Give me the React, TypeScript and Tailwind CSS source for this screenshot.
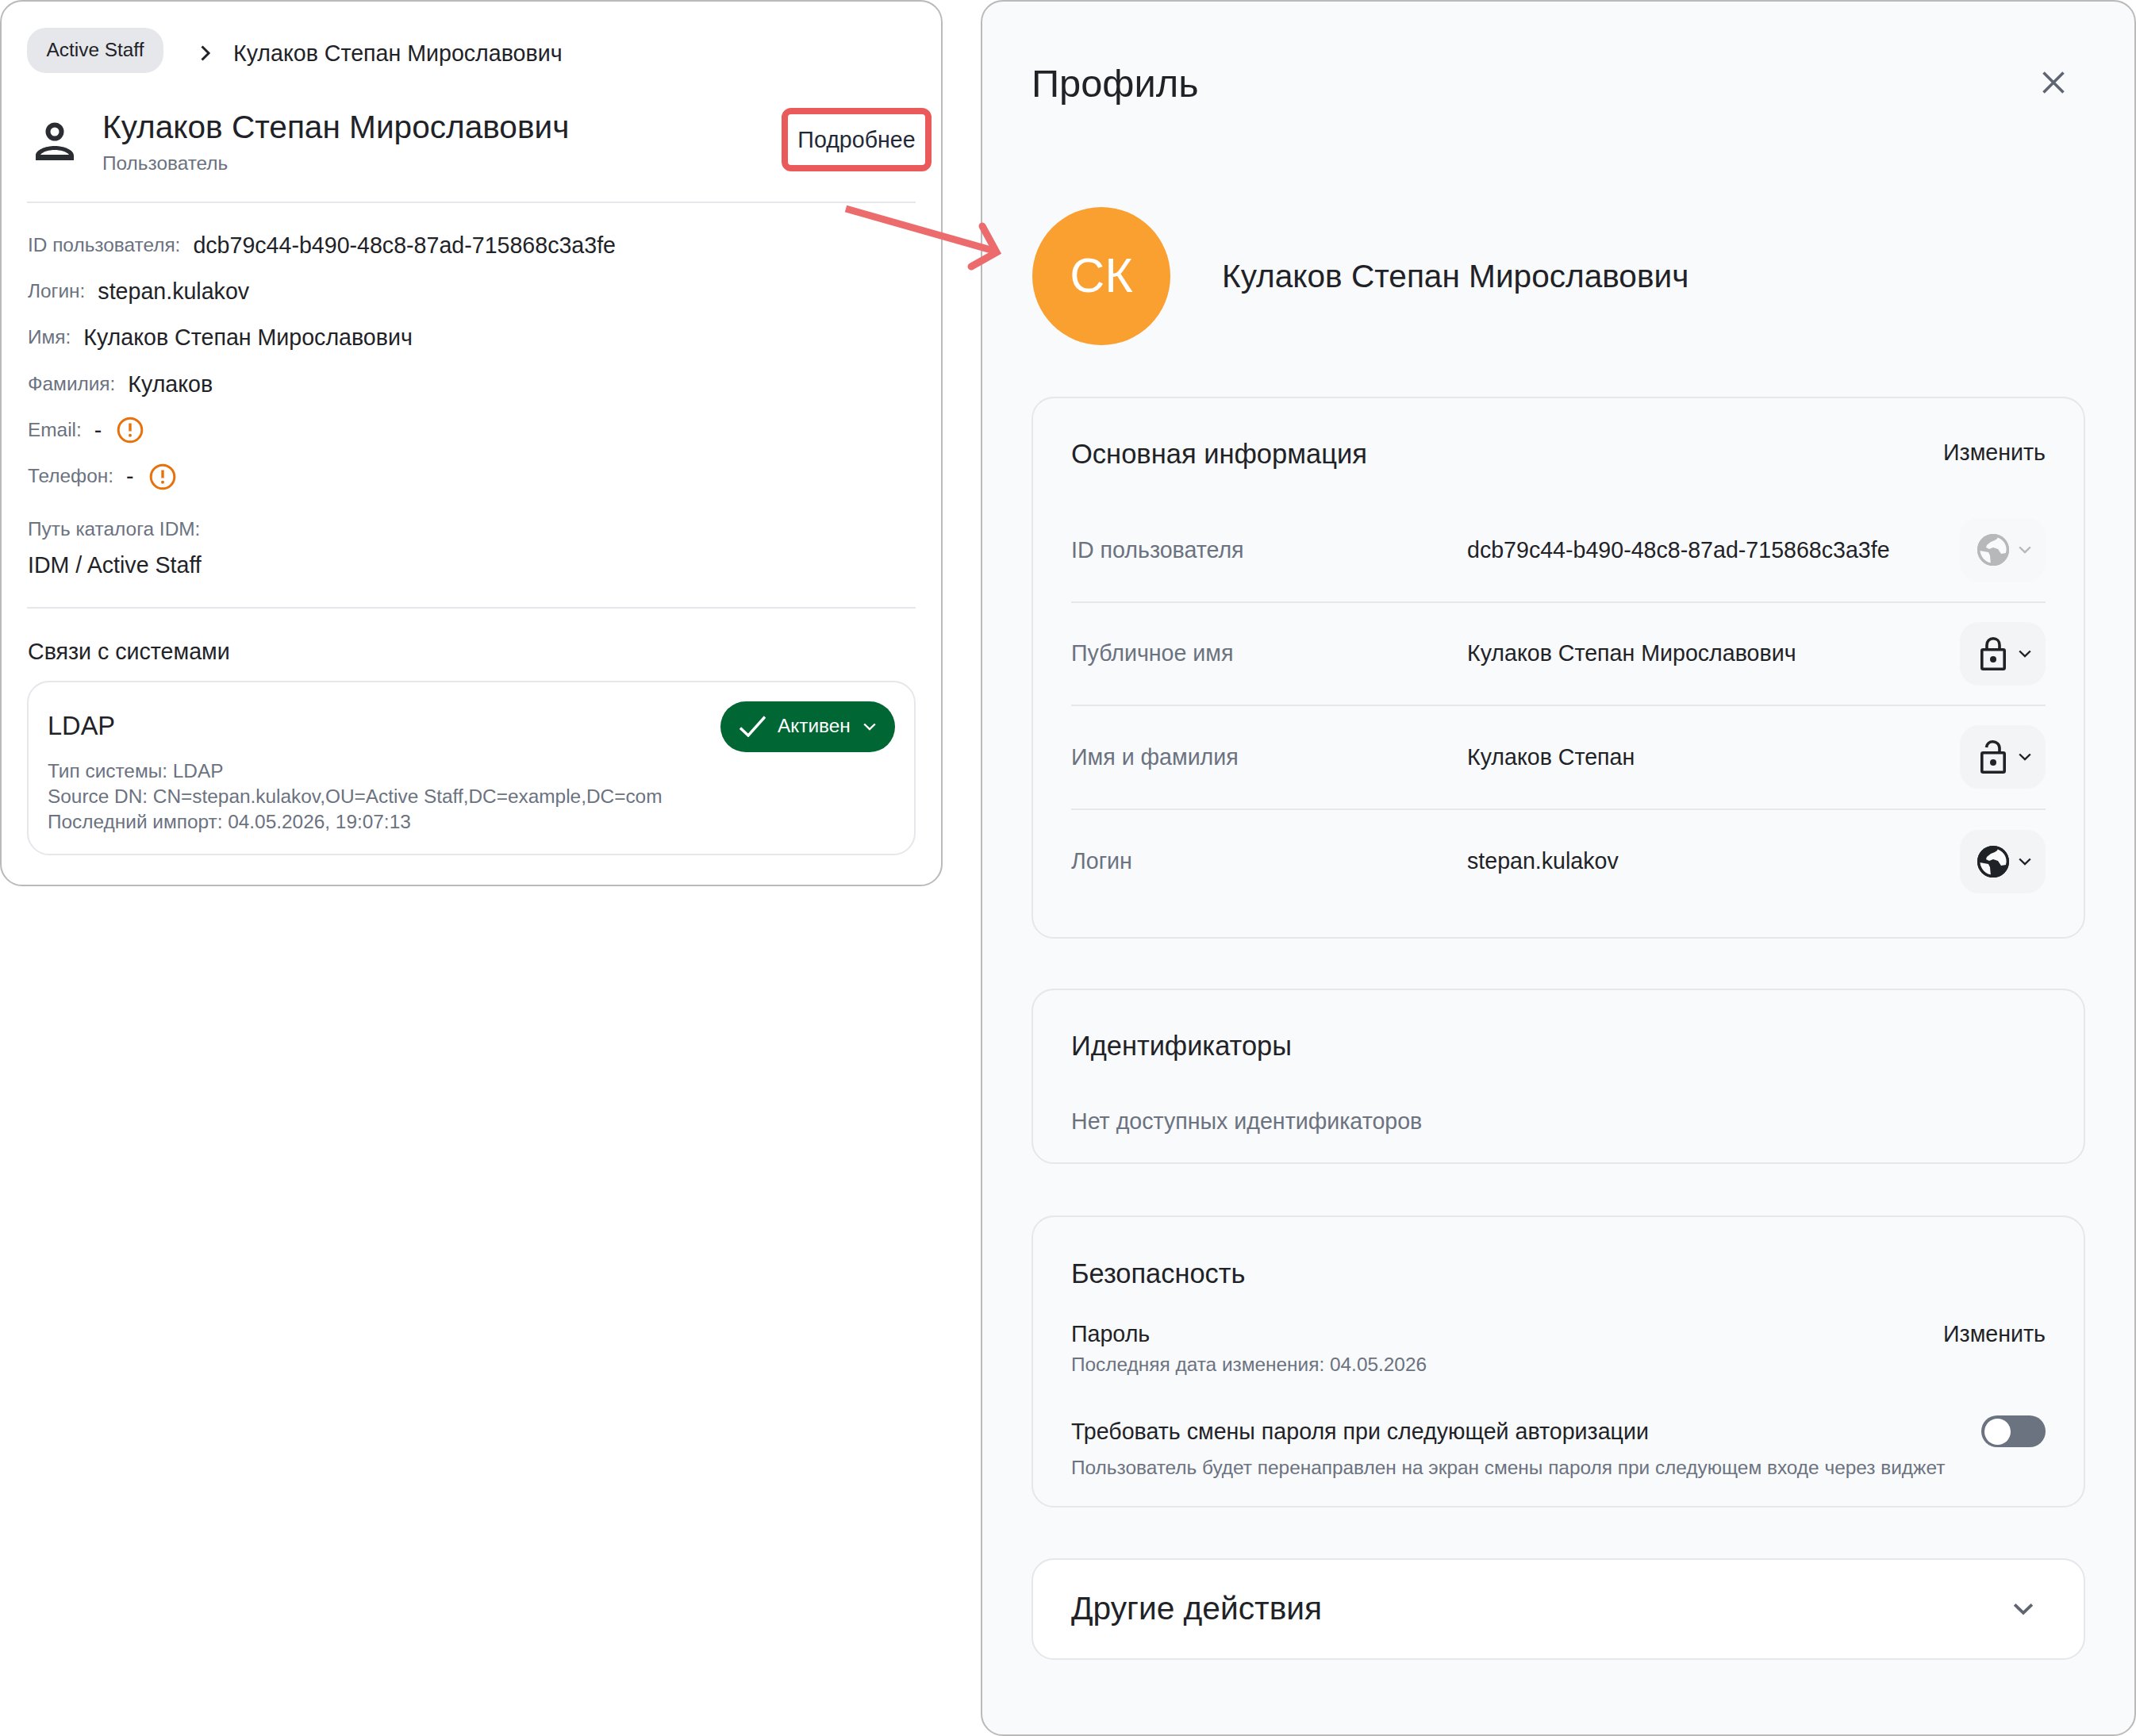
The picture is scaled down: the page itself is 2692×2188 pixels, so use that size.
import React from "react";

const Chevron = ({ className = "" }: { className?: string }) => (
  <svg viewBox="0 0 16 10" className={className} fill="none" stroke="currentColor" strokeWidth="2.4">
    <path d="M1.2 1.5 8 8 14.8 1.5" />
  </svg>
);

const Globe = () => (
  <svg viewBox="0 0 40 40" className="w-[40px] h-[40px]">
    <circle cx="20" cy="20" r="20" fill="currentColor" />
    <path fill="#f9fafb" d="M26 3 25 6 22 8 17 10 12 14 11 17 15 19 20 17 26 19 30 25 36 24 38 18C36 10 32 5 26 3z" />
    <path fill="#f9fafb" d="M3 21 14 23 16 27 17 38C10 36 4 29 3 21z" />
    <circle cx="20" cy="20" r="18.300" fill="none" stroke="currentColor" strokeWidth="3.400" />
  </svg>
);

const Lock = ({ open = false }: { open?: boolean }) => (
  <svg viewBox="0 0 32 42" className="w-[32px] h-[42px]" fill="none" stroke="currentColor" strokeWidth="3.600">
    <rect x="1.800" y="15.800" width="28.400" height="24.400" rx="1.500" />
    {open ? <path d="M7.500 9C8 4 11.500 1.800 15.500 1.800 20 1.800 24 5 24 10V15" /> : <path d="M8 15V10C8 5 11.500 1.800 16 1.800S24 5 24 10V15" />}
    <circle cx="16" cy="28" r="4" fill="currentColor" stroke="none" />
  </svg>
);

const Warn = () => (
  <svg viewBox="0 0 34 34" className="w-[34px] h-[34px] shrink-0" fill="none">
    <circle cx="17" cy="17" r="14.800" stroke="#e8710a" strokeWidth="3" />
    <path d="M17 8.500v10" stroke="#e8710a" strokeWidth="3.400" />
    <circle cx="17" cy="23.800" r="2" fill="#e8710a" />
  </svg>
);

const Field = ({ label, value, warn }: { label: string; value: string; warn?: boolean }) => (
  <div className="flex items-center h-[58.300px]">
    <span className="text-[24.400px] text-[#6b7280]">{label}</span>
    <span className="ml-[16px] text-[28.600px] text-[#1f2328]">{value}</span>
    {warn && <span className="ml-[19px]"><Warn /></span>}
  </div>
);

const Row = ({ label, value, icon, last, disabled }: { label: string; value: string; icon: React.ReactNode; last?: boolean; disabled?: boolean }) => (
  <div className={`flex items-center h-[130.500px] ${last ? "" : "border-b-2 border-[#e5e7eb]"}`}>
    <span className="w-[499px] text-[28.600px] text-[#6b7280]">{label}</span>
    <span className="text-[28.600px] text-[#1f2328]">{value}</span>
    <div className={`ml-auto w-[108px] h-[80px] rounded-[24px] bg-[#f3f4f6] flex items-center justify-end pr-[18px] gap-[12px] text-[#1f2328] ${disabled ? "opacity-30" : ""}`}>
      <span className="w-[40px] flex items-center justify-center">{icon}</span>
      <Chevron className="w-[16px] h-[10px]" />
    </div>
  </div>
);

export default function App() {
  return (
    <div className="relative flex items-start w-[2692px] h-[2188px] bg-white font-['Liberation_Sans',Arial,sans-serif]">
      <div className="w-[1188px] h-[1117px] shrink-0 rounded-[28px] border-2 border-[#bababa] bg-white pl-[33px] pr-[32px] pt-[33px]">
        <div className="flex items-center h-[64px]">
          <span className="h-[57px] w-[172px] -ml-[1px] -mt-[8px] rounded-[24px] bg-[#e5e7eb] flex items-center justify-center text-[24.400px] text-[#1f2328]">Active Staff</span>
          <svg viewBox="0 0 14 20" className="ml-[46px] w-[14px] h-[20px] text-[#1f2328]" fill="none" stroke="currentColor" strokeWidth="3">
            <path d="M2.500 1.500 11 10 2.500 18.500" />
          </svg>
          <span className="ml-[28px] text-[28.600px] text-[#1f2328]">Кулаков Степан Мирославович</span>
        </div>
        <div className="flex items-center mt-[33px] h-[96px]">
          <svg viewBox="0 0 48 48" className="ml-[10px] -mt-[4px] w-[48px] h-[48px] shrink-0 text-[#2a2d32]">
            <circle cx="24" cy="12" r="8.500" fill="none" stroke="currentColor" strokeWidth="6" />
            <path fillRule="evenodd" fill="currentColor" d="M0 48V42C0 35 12 30 24 30S48 35 48 42V48ZM6 41C9 37 17 35 24 35S39 37 42 41Z" />
          </svg>
          <div className="ml-[36px] -mt-[3px] flex flex-col">
            <span className="text-[40.600px] leading-[48px] text-[#1f2328]">Кулаков Степан Мирославович</span>
            <span className="mt-[6px] text-[24.400px] leading-[32px] text-[#6b7280]">Пользователь</span>
          </div>
          <span className="ml-auto -mr-[20px] w-[189px] h-[80px] -mt-[8px] rounded-[12px] border-[8px] border-[#ea5a5a] flex items-center justify-center text-[28.600px] text-[#1f2937]">Подробнее</span>
        </div>
        <div className="mt-[26px] -ml-[1px] border-t-2 border-[#e5e7eb] pt-[24px]">
          <div className="pl-[1px]">
            <Field label="ID пользователя:" value="dcb79c44-b490-48c8-87ad-715868c3a3fe" />
            <Field label="Логин:" value="stepan.kulakov" />
            <Field label="Имя:" value="Кулаков Степан Мирославович" />
            <Field label="Фамилия:" value="Кулаков" />
            <Field label="Email:" value="-" warn />
            <Field label="Телефон:" value="-" warn />
            <div className="mt-[21px] text-[24.400px] leading-[32px] text-[#6b7280]">Путь каталога IDM:</div>
            <div className="mt-[11px] text-[28.600px] leading-[36px] text-[#1f2328]">IDM / Active Staff</div>
          </div>
        </div>
        <div className="mt-[35px] -ml-[1px] border-t-2 border-[#e5e7eb] pt-[36px]">
          <div className="pl-[1px] text-[28.600px] leading-[36px] text-[#1f2328]">Связи с системами</div>
          <div className="mt-[19px] h-[220px] rounded-[28px] border-2 border-[#e5e7eb] px-[24px] pt-[24px]">
            <div className="flex items-center justify-between h-[64px]">
              <span className="-mt-[1px] text-[32.600px] text-[#1f2328]">LDAP</span>
              <div className="w-[220px] h-[64px] rounded-full bg-[#006633] flex items-center pl-[24px] text-white">
                <svg viewBox="0 0 33 27" className="w-[33px] h-[27px]" fill="none" stroke="currentColor" strokeWidth="3.400">
                  <path d="M1 15.500 11 25 32 1.500" />
                </svg>
                <span className="ml-[15px] text-[24.400px]">Активен</span>
                <Chevron className="ml-[16px] w-[16px] h-[10px]" />
              </div>
            </div>
            <div className="mt-[8px] text-[24.400px] leading-[32px] text-[#6b7280]">
              <div>Тип системы: LDAP</div>
              <div>Source DN: CN=stepan.kulakov,OU=Active Staff,DC=example,DC=com</div>
              <div>Последний импорт: 04.05.2026, 19:07:13</div>
            </div>
          </div>
        </div>
      </div>

      <div className="ml-[48px] w-[1456px] h-[2188px] shrink-0 rounded-[28px] border-2 border-[#bababa] bg-[#f9fafb] pl-[62px] pr-[62px] pt-[74px]">
        <div className="flex items-center justify-between h-[60px]">
          <span className="text-[48.800px] text-[#1f2328]">Профиль</span>
          <svg viewBox="0 0 30 30" className="mr-[25px] -mt-[4px] w-[30px] h-[30px] text-[#5f6672]" fill="none" stroke="currentColor" strokeWidth="3.600">
            <path d="M2.500 2.500 27.500 27.500M27.500 2.500 2.500 27.500" />
          </svg>
        </div>
        <div className="flex items-center mt-[125px] h-[173px]">
          <div className="ml-[1px] w-[174px] h-[174px] shrink-0 rounded-full bg-[#f9a030] flex items-center justify-center text-[61px] text-white">СК</div>
          <span className="ml-[65px] mt-[2px] text-[40.600px] text-[#1f2328]">Кулаков Степан Мирославович</span>
        </div>

        <section className="mt-[66px] h-[683px] rounded-[28px] border-2 border-[#e5e7eb] px-[48px] pt-[48px]">
          <div className="flex items-center justify-between h-[44px]">
            <span className="mt-[1px] text-[34.500px] text-[#1f2328]">Основная информация</span>
            <span className="-mt-[3px] text-[28.600px] text-[#1f2328]">Изменить</span>
          </div>
          <div className="mt-[35px]">
            <Row label="ID пользователя" value="dcb79c44-b490-48c8-87ad-715868c3a3fe" icon={<Globe />} disabled />
            <Row label="Публичное имя" value="Кулаков Степан Мирославович" icon={<Lock />} />
            <Row label="Имя и фамилия" value="Кулаков Степан" icon={<Lock open />} />
            <Row label="Логин" value="stepan.kulakov" icon={<Globe />} last />
          </div>
        </section>

        <section className="mt-[63px] h-[221px] rounded-[28px] border-2 border-[#e5e7eb] px-[48px] pt-[48px]">
          <div className="text-[34.400px] leading-[44px] text-[#1f2328]">Идентификаторы</div>
          <div className="mt-[53px] text-[28.600px] leading-[40px] text-[#6b7280]">Нет доступных идентификаторов</div>
        </section>

        <section className="mt-[65px] h-[368px] rounded-[28px] border-2 border-[#e5e7eb] px-[48px] pt-[49px]">
          <div className="text-[34.400px] leading-[44px] text-[#1f2328]">Безопасность</div>
          <div className="mt-[36px] flex items-center justify-between h-[36px]">
            <span className="text-[28.600px] text-[#1f2328]">Пароль</span>
            <span className="text-[28.600px] text-[#1f2328]">Изменить</span>
          </div>
          <div className="mt-[5px] text-[24.400px] leading-[32px] text-[#6b7280]">Последняя дата изменения: 04.05.2026</div>
          <div className="mt-[48px] flex items-center justify-between h-[40px]">
            <span className="text-[28.600px] text-[#1f2328]">Требовать смены пароля при следующей авторизации</span>
            <div className="w-[81px] h-[40px] rounded-full bg-[#6b7280] flex items-center pl-[4px]">
              <div className="w-[33px] h-[33px] rounded-full bg-white" />
            </div>
          </div>
          <div className="mt-[10px] text-[24.400px] leading-[32px] text-[#6b7280]">Пользователь будет перенаправлен на экран смены пароля при следующем входе через виджет</div>
        </section>

        <section className="mt-[64px] h-[128px] rounded-[28px] border-2 border-[#e5e7eb] bg-white pl-[48px] pr-[63px] flex items-center justify-between">
          <span className="text-[40.700px] text-[#1f2328]">Другие действия</span>
          <Chevron className="w-[26px] h-[16px] text-[#5f6672]" />
        </section>
      </div>

      <svg className="absolute left-[1050px] top-[250px] w-[220px] h-[100px]" viewBox="1050 250 220 100" fill="none" stroke="#ec6c6e" strokeWidth="9" strokeLinecap="round">
        <path strokeLinecap="butt" d="M1066 263 1256 317" />
        <path d="M1238 285 1256 318 1224 336" />
      </svg>
    </div>
  );
}
